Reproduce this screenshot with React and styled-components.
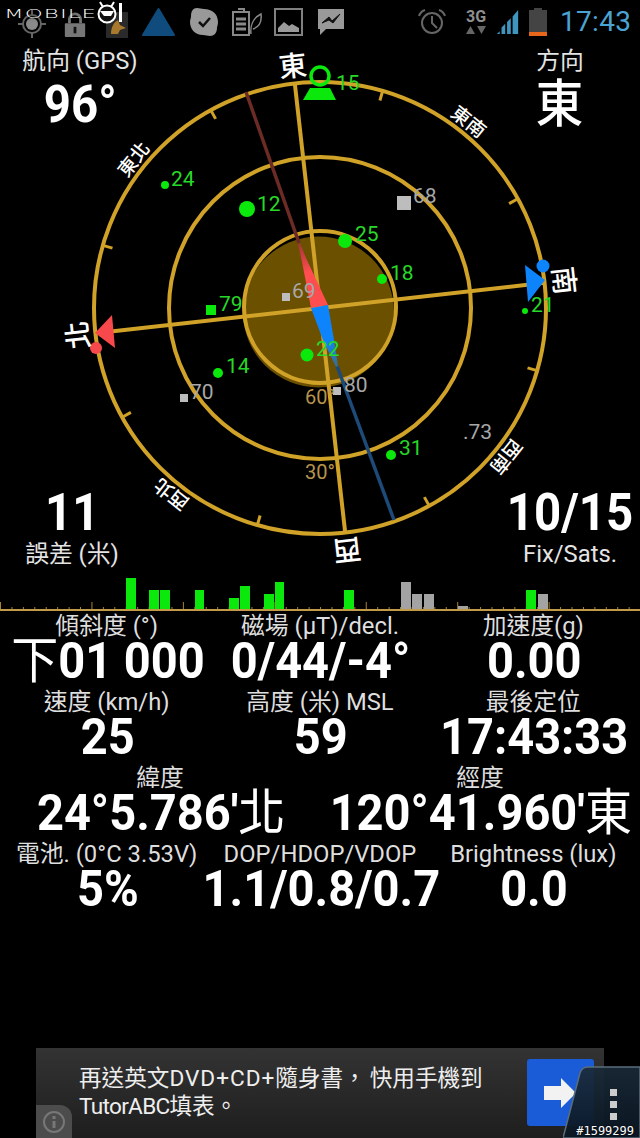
import React from "react";
import styled, { createGlobalStyle } from "styled-components";

const Global = createGlobalStyle`
  html, body { margin: 0; padding: 0; background: #000; }
  #root { width: 640px; height: 1138px; }
`;
const FONT = `Roboto, "Noto Sans CJK TC", sans-serif`;

const Page = styled.div`
  position: relative; width: 640px; height: 1138px; background: #000; overflow: hidden;
  display: flex; flex-direction: column; color: #fff; font-family: ${FONT};
`;
const StatusBar = styled.div`
  height: 44px; flex: none; display: flex; align-items: center; padding-left: 14px; box-sizing: border-box;
`;
const Slot = styled.div`
  width: ${p => p.$w}px; margin-left: ${p => p.$ml || 0}px; height: 44px; flex: none;
  display: flex; align-items: center; justify-content: center;
  padding-top: ${p => p.$pt || 0}px; box-sizing: border-box;
`;
const Clock = styled.div`
  margin-left: 4px; font-size: 28px; line-height: 46px; color: #4ba3d3; letter-spacing: .3px; font-weight: 400;
`;
const NetLabel = styled.div`
  display: flex; flex-direction: column; align-items: center; color: #8f8f8f; font-size: 16px; font-weight: 700; line-height: 16px;
`;
const LogoWrap = styled.div`
  position: absolute; left: 4px; top: 0; display: flex; align-items: center; height: 26px;
`;
const LogoText = styled.span`
  font-size: 13px; font-weight: 200; letter-spacing: .6px; color: #fff; display: inline-block; width: 92px;
  transform-origin: left center; transform: scaleX(1.76); font-family: "DejaVu Sans", sans-serif; white-space: nowrap;
  text-shadow: 0 0 3px #000; padding-top: 1px;
`;
const Radar = styled.div`
  position: relative; height: 526px; flex: none; display: flex; flex-direction: column; justify-content: space-between;
`;
const RadarSvg = styled.svg`
  position: absolute; left: 0; top: 0; width: 640px; height: 526px;
`;
const CornerRow = styled.div`
  position: relative; display: flex; justify-content: space-between; padding-top: ${p => p.$pt || 0}px;
`;
const Corner = styled.div`
  width: ${p => p.$w}px;
  display: flex; flex-direction: column; align-items: center; text-align: center; white-space: nowrap;
`;
const CornerLabel = styled.div`
  font-size: 23.8px; line-height: 32px; color: #e4e4e4;
`;
const CornerValue = styled.div`
  font-size: 51px; line-height: 54px; font-weight: ${p => p.$w || 700}; color: #fff;
  margin-top: ${p => p.$mt || 0}px; margin-bottom: ${p => p.$mb || 0}px;
  transform: scaleX(.93);
`;
const Chart = styled.svg`
  display: block; flex: none; width: 640px; height: 42px;
`;
const Readouts = styled.div`
  display: flex; flex-direction: column;
`;
const ReadRow = styled.div`
  display: grid; grid-template-columns: repeat(${p => p.$cols}, minmax(0, 1fr)); height: 76px;
`;
const Cell = styled.div`
  display: flex; flex-direction: column; align-items: center; white-space: nowrap;
`;
const ReadLabel = styled.div`
  font-size: 23.8px; line-height: 29px; color: #dedede;
`;
const ReadValue = styled.div`
  font-size: 50px; line-height: 40px; font-weight: 700; color: #fff; transform: translateX(1px) scaleX(.94);
`;
const Hanzi = styled.span`
  font-weight: 400;
`;
const AdArea = styled.div`
  margin-top: auto; flex: none; width: 568px; height: 90px; margin-left: 36px; position: relative;
  background: linear-gradient(#333, #1e1e1e); display: flex; align-items: flex-start; box-sizing: border-box; padding: 17px 0 0 43px;
`;
const AdText = styled.div`
  width: 430px; font-size: 22.6px; line-height: 28px; color: #eee;
`;
const AdLatin = styled.span`
  letter-spacing: ${p => p.$ls}px;
`;
const AdComma = styled.span`
  margin: 0 4px 0 0;
`;
const AdButton = styled.div`
  position: absolute; right: 10px; top: 11px; width: 67px; height: 67px; border-radius: 3px; background: #1a5bd8;
  display: flex; align-items: center; padding-left: 17px; box-sizing: border-box;
`;
const InfoTab = styled.div`
  position: absolute; left: 0; bottom: 0; width: 36px; height: 33px; background: #4c4c4c; border-top-right-radius: 12px;
  display: flex; align-items: center; justify-content: center;
`;
const MenuTab = styled.div`
  position: absolute; right: 0; bottom: 0; width: 77px; height: 72px;
`;
const Watermark = styled.div`
  position: absolute; right: 6px; bottom: 0; font: 12px "DejaVu Sans Mono", monospace; color: #fff; line-height: 14px;
  text-shadow: 0 0 2px #000;
`;

const GOLD = "#d1a228";
const CX = 320, CY = 308;

const labels = [
  { t: "東", a: 0, r: 243, s: 28 },
  { t: "南", a: 90, r: 245, s: 28 },
  { t: "西", a: 180, r: 243, s: 28 },
  { t: "北", a: 270, r: 243, s: 28 },
  { t: "東南", a: 45, r: 238, s: 19 },
  { t: "西南", a: 135, r: 238, s: 19 },
  { t: "西北", a: 225, r: 238, s: 19 },
  { t: "東北", a: 315, r: 238, s: 19 },
];
const ticks = [22.5, 67.5, 112.5, 157.5, 202.5, 247.5, 292.5, 337.5];

const greens = [
  { n: 24, x: 165, y: 185, r: 4, tx: 171, ty: 186 },
  { n: 12, x: 247, y: 209, r: 8, tx: 257, ty: 211 },
  { n: 25, x: 345, y: 241, r: 7, tx: 355, ty: 241 },
  { n: 18, x: 382, y: 279, r: 5, tx: 390, ty: 280 },
  { n: 21, x: 525, y: 311, r: 3, tx: 531, ty: 312 },
  { n: 14, x: 218, y: 373, r: 5, tx: 226, ty: 373 },
  { n: 22, x: 307, y: 355, r: 6.5, tx: 316, ty: 356 },
  { n: 31, x: 391, y: 455, r: 5, tx: 399, ty: 455 },
];
const grays = [
  { n: 68, x: 404, y: 203, s: 14, tx: 413, ty: 203 },
  { n: 69, x: 286, y: 297, s: 8, tx: 292, ty: 298 },
  { n: 70, x: 184, y: 398, s: 8, tx: 190, ty: 399 },
  { n: 80, x: 337, y: 391, s: 8, tx: 344, ty: 392 },
];
const bars = [
  [126, 10, 578, 1], [149, 10, 590, 1], [160, 10, 590, 1], [195, 9, 590, 1], [229, 10, 598, 1],
  [240, 10, 586, 1], [264, 10, 594, 1], [275, 9, 582, 1], [344, 10, 590, 1],
  [401, 10, 582, 0], [412, 10, 594, 0], [424, 10, 594, 0], [458, 10, 606, 0],
  [526, 10, 590, 1], [538, 10, 594, 0],
];

const RadarDrawing = () => (
  <RadarSvg viewBox="0 44 640 526" fontFamily={FONT}>
    <defs>
      <linearGradient id="redFade" gradientUnits="userSpaceOnUse" x1="320" y1="308" x2="299" y2="243">
        <stop offset="0.55" stopColor="#ff4d50" />
        <stop offset="1" stopColor="#a03434" />
      </linearGradient>
      <linearGradient id="blueFade" gradientUnits="userSpaceOnUse" x1="320" y1="308" x2="337" y2="367">
        <stop offset="0.55" stopColor="#0d84fb" />
        <stop offset="1" stopColor="#3d6c88" />
      </linearGradient>
    </defs>
    <circle cx="318.5" cy="312" r="75.5" fill="#6b5000" />
    <g fill="none" stroke={GOLD}>
      <circle cx={CX} cy={CY} r="226" strokeWidth="4" />
      <circle cx={CX} cy={CY} r="151" strokeWidth="4" />
      <circle cx={CX} cy={CY - 1} r="76" strokeWidth="4" />
    </g>
    <g transform={`rotate(-6.4 ${CX} ${CY})`}>
      <g stroke={GOLD} strokeWidth="4">
        <line x1={CX} y1={CY - 226} x2={CX} y2={CY + 226} />
        <line x1={CX - 226} y1={CY} x2={CX + 226} y2={CY} />
      </g>
      {ticks.map(a => (
        <line key={a} x1={CX} y1={CY - 226} x2={CX} y2={CY - 216} stroke={GOLD} strokeWidth="3" transform={`rotate(${a} ${CX} ${CY})`} />
      ))}
    </g>
    <g stroke="#6d2b25" strokeWidth="3.5"><line x1="299" y1="243" x2="246" y2="92" /></g>
    <g stroke="#1d4a78" strokeWidth="3.5"><line x1="337" y1="366" x2="394" y2="520" /></g>
    <polygon points="311,308 328,305 306,258 300,243 298,244 302,262" fill="url(#redFade)" />
    <polygon points="311,308 328,305 334,340 338,366 336,367 323,340" fill="url(#blueFade)" />
    <polygon points="95,333 112,315 115,348" fill="#f7484c" />
    <circle cx="96" cy="348" r="6" fill="#f7484c" />
    <polygon points="525,265 528,302 545,280" fill="#0d84fb" />
    <circle cx="543" cy="266" r="6.5" fill="#0d84fb" />
    <g fill="#fff" textAnchor="middle" dominantBaseline="central" fontWeight="500">
      {labels.map(l => (
        <text key={l.t} x={CX} y={CY - l.r} fontSize={l.s} transform={`rotate(${l.a - 6.4} ${CX} ${CY})`}>{l.t}</text>
      ))}
    </g>
    <g fill="#27d827" fontSize="21">
      {greens.map(s => (
        <React.Fragment key={s.n}>
          <circle cx={s.x} cy={s.y} r={s.r} fill="#0be80b" />
          <text x={s.tx} y={s.ty}>{s.n}</text>
        </React.Fragment>
      ))}
      <rect x="206" y="305" width="10" height="10" fill="#0be80b" />
      <text x="219" y="311">79</text>
      <circle cx="320" cy="76" r="9" fill="none" stroke="#0be80b" strokeWidth="3.5" />
      <polygon points="303,100 336,100 330,88 310,88" fill="#0be80b" />
      <text x="336" y="90">15</text>
    </g>
    <g fill="#a8a8a8" fontSize="21">
      {grays.map(s => (
        <React.Fragment key={s.n}>
          <rect x={s.x - s.s / 2} y={s.y - s.s / 2} width={s.s} height={s.s} fill="#bdbdbd" />
          <text x={s.tx} y={s.ty}>{s.n}</text>
        </React.Fragment>
      ))}
      <text x="463" y="439">.73</text>
    </g>
    <g fill="#b8934c" fontSize="20">
      <text x="305" y="404">60°</text>
      <text x="305" y="479">30°</text>
    </g>
  </RadarSvg>
);

const BarChart = () => {
  const ticksX = Array.from({ length: 57 }, (_, i) => i);
  return (
    <Chart viewBox="0 570 640 42">
      {ticksX.map(i => (
        <line key={i} x1={i * 11.43 + 0.5} x2={i * 11.43 + 0.5} y1="610" y2={i % 8 === 0 ? 602 : 607} stroke="#a8822f" strokeWidth="1" />
      ))}
      {bars.map(([x, w, top, g]) => (
        <rect key={x} x={x} y={top} width={w} height={610 - top} fill={g ? "#0be80b" : "#a3a3a3"} />
      ))}
      <rect x="0" y="609" width="640" height="2" fill="#c39a45" />
    </Chart>
  );
};

const Icons = {
  Gps: () => (
    <svg width="30" height="30" viewBox="0 0 30 30" fill="none" stroke="#666" strokeWidth="2">
      <circle cx="15" cy="15" r="9" />
      <circle cx="15" cy="15" r="6" fill="#8a8a8a" stroke="none" />
      <path d="M15 1v5M15 24v5M1 15h5M24 15h5" />
    </svg>
  ),
  Lock: () => (
    <svg width="24" height="26" viewBox="0 0 26 28">
      <path d="M7 12V8a6 6 0 0 1 12 0v4" fill="none" stroke="#777" strokeWidth="3" />
      <rect x="2" y="12" width="22" height="15" rx="1" fill="#777" />
      <rect x="11.5" y="16" width="3" height="7" fill="#111" />
    </svg>
  ),
  Photo: () => (
    <svg width="22" height="26" viewBox="0 0 22 26">
      <rect width="22" height="26" fill="#2a2a2a" />
      <path d="M5 22c0-7 3-12 7-14l2 5 6 3-6 2-2 4z" fill="#a8782c" />
    </svg>
  ),
  Tri: () => (
    <svg width="33" height="30" viewBox="0 0 33 30">
      <path d="M16.5 2 32 28H1z" fill="#0f4c7d" stroke="#0f4c7d" strokeWidth="2" strokeLinejoin="round" />
    </svg>
  ),
  Skype: () => (
    <svg width="30" height="30" viewBox="0 0 30 30">
      <path d="M8 1c3 0 4 1 7 1 8 0 14 5 14 13 0 3-1 4-1 6 0 5-3 8-7 8-3 0-4-1-7-1C6 28 1 22 1 15c0-3 1-3 1-6 0-5 2-8 6-8z" fill="#999" />
      <path d="M10 15l4 4 7-8" fill="none" stroke="#111" strokeWidth="2.500" />
    </svg>
  ),
  BatLeaf: () => (
    <svg width="30" height="28" viewBox="0 0 30 28" fill="none" stroke="#888" strokeWidth="2">
      <rect x="1" y="4" width="16" height="23" />
      <path d="M6 1h6v3" />
      <path d="M4 11h10M4 16h10M4 21h10" strokeWidth="3" />
      <path d="M19 26c-1-8 2-16 10-20 1 8-2 13-8 15" strokeWidth="1.500" />
    </svg>
  ),
  Picture: () => (
    <svg width="29" height="28" viewBox="0 0 29 28">
      <rect x="1" y="1" width="27" height="26" fill="none" stroke="#808080" strokeWidth="2" />
      <path d="M4 24v-4l6-6 5 4 3-2 7 4v4z" fill="#9a9a9a" />
    </svg>
  ),
  Msg: () => (
    <svg width="28" height="28" viewBox="0 0 28 28">
      <path d="M1 1h26v20H9l-6 6v-6H1z" fill="#999" />
      <path d="M5 15l7-6 3 4 8-7-7 9-4-3z" fill="#111" stroke="#111" />
    </svg>
  ),
  Alarm: () => (
    <svg width="30" height="30" viewBox="0 0 30 30" fill="none" stroke="#666" strokeWidth="2">
      <circle cx="15" cy="16" r="10" />
      <path d="M15 9v7l5 5M2 9c1-3 3-5 6-6M28 9c-1-3-3-5-6-6" />
    </svg>
  ),
  Signal: () => (
    <svg width="26" height="28" viewBox="0 0 26 28" fill="#3f95bd">
      <path d="M1 27l3-3v3zM6 27v-7l4-4v11zM12 27V14l4-4v17zM18 27V8l6-7v26z" />
    </svg>
  ),
  Battery: () => (
    <svg width="18" height="28" viewBox="0 0 18 28">
      <rect x="5" y="0" width="8" height="3" fill="#444" />
      <rect x="0" y="2" width="18" height="26" fill="#444" />
      <rect x="0" y="24" width="18" height="4" fill="#e8661a" />
    </svg>
  ),
};

const Logo = () => (
  <LogoWrap>
    <LogoText>MOBILE</LogoText>
    <svg width="28" height="26" viewBox="0 0 28 26">
      <circle cx="11" cy="14" r="8.500" fill="#111" stroke="#fff" strokeWidth="2" />
      <path d="M4 11l14 0-3 5H8z" fill="#fff" />
      <path d="M4 2l3 5M18 2l-3 5" stroke="#fff" strokeWidth="2" />
      <rect x="23" y="3" width="3" height="19" fill="#fff" />
    </svg>
  </LogoWrap>
);

const Cells = ({ items }) => items.map(([l, v]) => (
  <Cell key={l}><ReadLabel>{l}</ReadLabel><ReadValue>{v}</ReadValue></Cell>
));

export default function App() {
  return (
    <Page>
      <Global />
      <StatusBar>
        <Slot $w={36} $pt={4}><Icons.Gps /></Slot>
        <Slot $w={50} $pt={6}><Icons.Lock /></Slot>
        <Slot $w={34} $pt={6}><Icons.Photo /></Slot>
        <Slot $w={48}><Icons.Tri /></Slot>
        <Slot $w={44}><Icons.Skype /></Slot>
        <Slot $w={41}><Icons.BatLeaf /></Slot>
        <Slot $w={43}><Icons.Picture /></Slot>
        <Slot $w={42}><Icons.Msg /></Slot>
        <Slot $w={48} $ml={56}><Icons.Alarm /></Slot>
        <Slot $w={40}><NetLabel>3G<svg width="22" height="10" viewBox="0 0 22 10" fill="#666"><path d="M1 9 5.500 1 10 9zM12 1h9l-4.500 8z" /></svg></NetLabel></Slot>
        <Slot $w={24}><Icons.Signal /></Slot>
        <Slot $w={36}><Icons.Battery /></Slot>
        <Clock>17:43</Clock>
      </StatusBar>
      <Radar>
        <RadarDrawing />
        <CornerRow $pt={1}>
          <Corner $w={160}><CornerLabel>航向 (GPS)</CornerLabel><CornerValue $mt={1}>96°</CornerValue></Corner>
          <Corner $w={160}><CornerLabel>方向</CornerLabel><CornerValue $w={500} $mt={1}>東</CornerValue></Corner>
        </CornerRow>
        <CornerRow>
          <Corner $w={144}><CornerValue $mb={-2} $mt={2}>11</CornerValue><CornerLabel>誤差 (米)</CornerLabel></Corner>
          <Corner $w={140}><CornerValue $mb={-2} $mt={2}>10/15</CornerValue><CornerLabel>Fix/Sats.</CornerLabel></Corner>
        </CornerRow>
      </Radar>
      <BarChart />
      <Readouts>
        <ReadRow $cols={3}><Cells items={[["傾斜度 (°)", <><Hanzi>下</Hanzi>01 000</>], ["磁場 (µT)/decl.", "0/44/-4°"], ["加速度(g)", "0.00"]]} /></ReadRow>
        <ReadRow $cols={3}><Cells items={[["速度 (km/h)", "25"], ["高度 (米) MSL", "59"], ["最後定位", "17:43:33"]]} /></ReadRow>
        <ReadRow $cols={2}><Cells items={[["緯度", <>24°5.786'<Hanzi>北</Hanzi></>], ["經度", <>120°41.960'<Hanzi>東</Hanzi></>]]} /></ReadRow>
        <ReadRow $cols={3}><Cells items={[["電池. (0°C 3.53V)", "5%"], ["DOP/HDOP/VDOP", "1.1/0.8/0.7"], ["Brightness (lux)", "0.0"]]} /></ReadRow>
      </Readouts>
      <AdArea>
        <AdText>再送英文<AdLatin $ls={1}>DVD+CD+</AdLatin>隨身書<AdComma>，</AdComma>快用手機到 <AdLatin $ls={-0.7}>TutorABC</AdLatin>填表。</AdText>
        <AdButton>
          <svg width="32" height="30" viewBox="0 0 32 30"><path d="M0 8h17V0l15 15-15 15v-8H0z" fill="#f2f2f2" /></svg>
        </AdButton>
        <InfoTab>
          <svg width="24" height="24" viewBox="0 0 24 24" fill="none" stroke="#777" strokeWidth="2">
            <circle cx="12" cy="12" r="10" />
            <path d="M12 6v3M12 11v7" strokeWidth="3" />
          </svg>
        </InfoTab>
      </AdArea>
      <MenuTab>
        <svg width="77" height="72" viewBox="0 0 77 72">
          <defs>
            <linearGradient id="tabFill" x1="0" y1="0" x2="0" y2="1">
              <stop offset="0" stopColor="#1a2a38" stopOpacity=".92" />
              <stop offset="1" stopColor="#0a1622" stopOpacity=".95" />
            </linearGradient>
          </defs>
          <path d="M0 72 17 7q2-6 8-6h52v71z" fill="url(#tabFill)" stroke="#5a6d7c" strokeWidth="1.500" />
          <rect x="47" y="23" width="7" height="7" fill="#ccc" />
          <rect x="47" y="35" width="7" height="7" fill="#ccc" />
          <rect x="47" y="47" width="7" height="7" fill="#ccc" />
        </svg>
      </MenuTab>
      <Logo />
      <Watermark>#1599299</Watermark>
    </Page>
  );
}
